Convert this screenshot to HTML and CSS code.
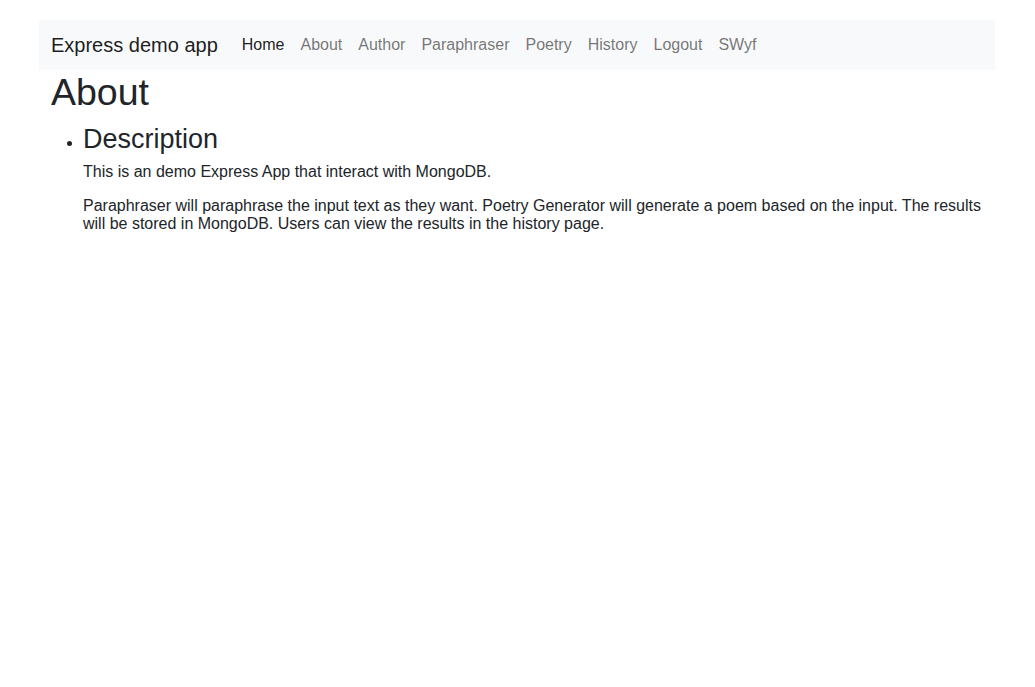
FILE: index.html
```html
<!DOCTYPE html>
<html lang="en">
<head>
<meta charset="utf-8">
<title>About</title>
<link rel="stylesheet" href="styles.css">
</head>
<body>
<div class="page">
  <nav class="navbar">
    <a class="brand" href="#">Express demo app</a>
    <ul class="nav-links">
      <li><a class="nav-link active" href="#">Home</a></li>
      <li><a class="nav-link" href="#">About</a></li>
      <li><a class="nav-link" href="#">Author</a></li>
      <li><a class="nav-link" href="#">Paraphraser</a></li>
      <li><a class="nav-link" href="#">Poetry</a></li>
      <li><a class="nav-link" href="#">History</a></li>
      <li><a class="nav-link" href="#">Logout</a></li>
      <li><a class="nav-link" href="#">SWyf</a></li>
    </ul>
  </nav>
  <main class="content">
    <h1 class="title">About</h1>
    <ul class="sections">
      <li>
        <h3 class="section-title">Description</h3>
        <p class="text">This is an demo Express App that interact with MongoDB.</p>
        <p class="text">Paraphraser will paraphrase the input text as they want. Poetry Generator will generate a poem based on the input. The results will be stored in MongoDB. Users can view the results in the history page.</p>
      </li>
    </ul>
  </main>
</div>
</body>
</html>
```

FILE: styles.css
```css
html, body {
  margin: 0;
  padding: 0;
  background: #fff;
}
body {
  font-family: "Liberation Sans", Arial, sans-serif;
  font-size: 16px;
  color: #212529;
}
.page {
  width: 956px;
  margin: 20px 0 0 39px;
}
.navbar {
  display: flex;
  align-items: center;
  height: 50px;
  padding: 0 12px;
  box-sizing: border-box;
  background: #f8f9fa;
}
.brand {
  font-size: 20px;
  line-height: 30px;
  color: rgba(0, 0, 0, 0.9);
  text-decoration: none;
  margin-right: 16px;
}
.nav-links {
  display: flex;
  list-style: none;
  margin: 0;
  padding: 0;
}
.nav-link {
  display: block;
  padding: 0 8px;
  font-size: 16px;
  line-height: 24px;
  color: rgba(0, 0, 0, 0.55);
  text-decoration: none;
}
.nav-link.active {
  color: rgba(0, 0, 0, 0.9);
}
.content {
  padding: 0 12px;
}
.title {
  font-size: 37.5px;
  font-weight: 500;
  line-height: 1.2;
  margin: 0 0 8px;
}
.sections {
  margin: 0;
  padding-left: 32px;
}
.section-title {
  font-size: 27px;
  font-weight: 500;
  line-height: 1.2;
  margin: 0 0 8px;
}
.text {
  margin: 0 0 16px;
  line-height: normal;
}
```
